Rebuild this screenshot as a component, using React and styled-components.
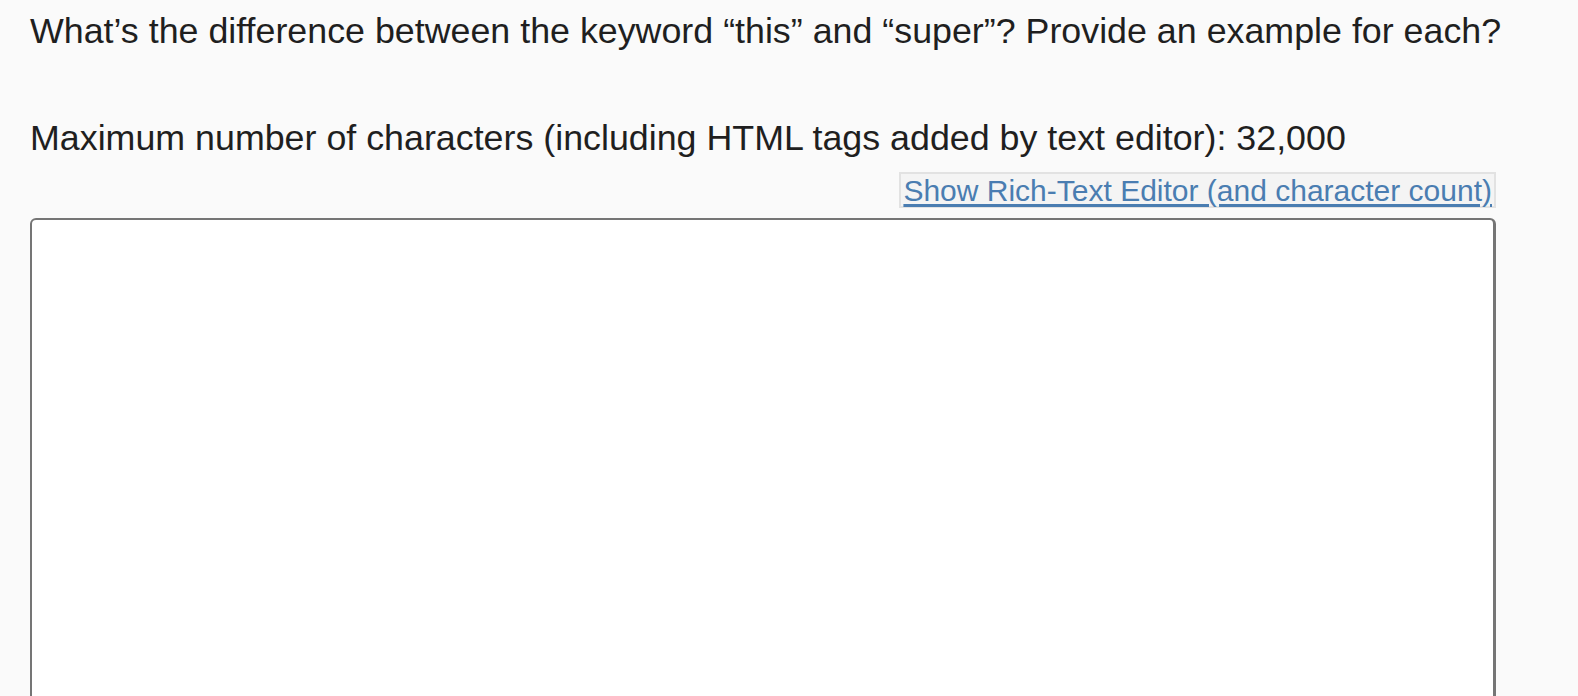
import styled, { createGlobalStyle } from "styled-components";

const GlobalStyle = createGlobalStyle`
  html, body {
    margin: 0;
    padding: 0;
    background: #fafafa;
    overflow: hidden;
  }
  body {
    font-family: "Liberation Sans", Arial, Helvetica, sans-serif;
    color: #1f1f1f;
  }
`;

const Page = styled.div`
  width: 1466px;
  padding: 10px 0 0 30px;
`;

const Question = styled.p`
  margin: 0;
  font-size: 35.8px;
  line-height: 43px;
  white-space: nowrap;
`;

const Limit = styled.p`
  margin: 64px 0 0;
  font-size: 35.8px;
  line-height: 43px;
  white-space: nowrap;
`;

const LinkRow = styled.div`
  display: flex;
  justify-content: flex-end;
  margin-top: 12px;
`;

const EditorLink = styled.a`
  display: inline-block;
  padding: 2px 2px 0;
  border: 2px solid #e2e2e2;
  background: #f4f4f4;
  color: #4a7db1;
  font-size: 30px;
  line-height: 30px;
  text-decoration: underline;
  text-underline-offset: 3px;
  cursor: pointer;
`;

const AnswerBox = styled.textarea`
  display: block;
  box-sizing: border-box;
  width: 1466px;
  height: 600px;
  margin-top: 10px;
  border: 2px solid #757575;
  border-right-width: 3px;
  border-radius: 6px;
  background: #ffffff;
  resize: none;
  outline: none;
  font-family: inherit;
  font-size: 26px;
`;

function App() {
  return (
    <>
      <GlobalStyle />
      <Page>
        <Question>
          What’s the difference between the keyword “this” and “super”? Provide an example for each?
        </Question>
        <Limit>
          Maximum number of characters (including HTML tags added by text editor): 32,000
        </Limit>
        <LinkRow>
          <EditorLink>Show Rich-Text Editor (and character count)</EditorLink>
        </LinkRow>
        <AnswerBox />
      </Page>
    </>
  );
}

export default App;
